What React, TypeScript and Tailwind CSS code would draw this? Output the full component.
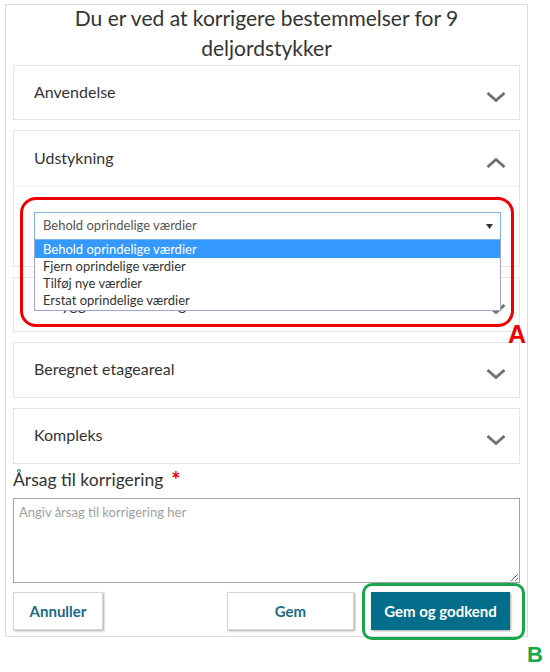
import React from "react";

const options = [
  "Behold oprindelige værdier",
  "Fjern oprindelige værdier",
  "Tilføj nye værdier",
  "Erstat oprindelige værdier",
];

function Chevron({ up }: { up?: boolean }) {
  return (
    <svg width="20" height="10" viewBox="0 0 20 10" className="shrink-0 mt-[8px]">
      <polyline
        points={up ? "1.5,9 10,1.5 18.5,9" : "1.5,1 10,8.5 18.5,1"}
        fill="none"
        stroke="#707070"
        strokeWidth="2.8"
      />
    </svg>
  );
}

function Section({
  title,
  open,
  h = "h-[53px]",
  children,
}: {
  title: string;
  open?: boolean;
  h?: string;
  children?: React.ReactNode;
}) {
  return (
    <div className="border border-[#e4e4e4] bg-white">
      <div className={`flex items-center justify-between pl-[20px] pr-[13px] ${open ? "h-[55px]" : h}`}>
        <span className="-mt-[2px] text-[16px] text-[#333]">{title}</span>
        <Chevron up={open} />
      </div>
      {children}
    </div>
  );
}

export default function App() {
  return (
    <div className="relative w-[550px] h-[672px] overflow-hidden bg-white font-[Lato,sans-serif]">
      <div className="ml-[5px] mt-[4px] w-[523px] border border-[#dcdcdc] px-[7px] pb-[6px]">
        <h1 className="-mt-[2px] mb-[2px] px-[40px] text-center text-[21px] leading-[30px] text-[#333]">
          Du er ved at korrigere bestemmelser for 9 deljordstykker
        </h1>

        <div className="flex flex-col gap-[10px]">
          <Section title="Anvendelse" />

          <Section title="Udstykning" open>
            <div className="border-t border-[#eeeeee] pl-[20px] pr-[18px] pt-[25px] pb-[26px]">
              <div className="relative">
                <div className="flex h-[28px] items-center justify-between border border-[#80b5e8] pl-[8px] pr-[7px] text-[13px] text-[#555]">
                  <span>Behold oprindelige værdier</span>
                  <svg width="7" height="5" viewBox="0 0 7 5">
                    <polygon points="0,0 7,0 3.5,5" fill="#333" />
                  </svg>
                </div>
                <ul className="absolute left-0 right-0 top-full z-10 border border-[#9fa6c9] border-t-0 bg-white pb-[1px] text-[13px] text-[#333]">
                  {options.map((o, i) => (
                    <li
                      key={o}
                      className={`pl-[8px] ${i === 0 ? "h-[18px] leading-[18px] bg-[#3399ff] text-white" : "h-[17px] leading-[17px]"}`}
                    >
                      {o}
                    </li>
                  ))}
                </ul>
              </div>
            </div>
          </Section>

          <Section title="Bebyggelsens omfang" />
          <Section title="Beregnet etageareal" h="h-[54px]" />
          <Section title="Kompleks" h="h-[54px]" />
        </div>

        <div className="mt-[2px] flex items-center leading-[28px]">
          <span className="text-[17.5px] text-[#333]">Årsag til korrigering</span>
          <span className="ml-[8px] text-[22px] font-bold text-[#e60000]">*</span>
        </div>

        <textarea
          className="mt-[4px] block h-[85px] w-full border border-[#a3a3a3] px-[5px] py-[4px] text-[13px] text-[#333] placeholder:text-[#a0a0a0] outline-none"
          placeholder="Angiv årsag til korrigering her"
        />

        <div className="mt-[9px] mr-[10px] flex items-center">
          <button className="h-[38px] w-[90px] border border-[#d6d6d6] bg-white text-[15px] font-bold text-[#1b6a88] shadow-[1px_1px_2px_rgba(0,0,0,0.35)]">
            Annuller
          </button>
          <div className="flex-1" />
          <button className="h-[38px] w-[127px] border border-[#d6d6d6] bg-white text-[15px] font-bold text-[#1b6a88] shadow-[1px_1px_2px_rgba(0,0,0,0.35)]">
            Gem
          </button>
          <button className="ml-[17px] h-[38px] w-[139px] bg-[#036d8c] text-[15px] font-bold text-white shadow-[1px_1px_2px_rgba(0,0,0,0.35)]">
            Gem og godkend
          </button>
        </div>
      </div>

      {/* annotations */}
      <div className="pointer-events-none absolute left-[20px] top-[197px] h-[130px] w-[494px] rounded-[16px] border-[3px] border-[#ee0000]" />
      <span className="absolute left-[508px] top-[322px] font-['Liberation_Sans',sans-serif] text-[25px] font-bold leading-none text-[#ee0000]">
        A
      </span>
      <div className="pointer-events-none absolute left-[362px] top-[583px] h-[57px] w-[163px] rounded-[10px] border-[3px] border-[#1ca64c]" />
      <span className="absolute left-[527px] top-[644px] font-['Liberation_Sans',sans-serif] text-[22px] font-bold leading-none text-[#1ca64c]">
        B
      </span>
    </div>
  );
}
